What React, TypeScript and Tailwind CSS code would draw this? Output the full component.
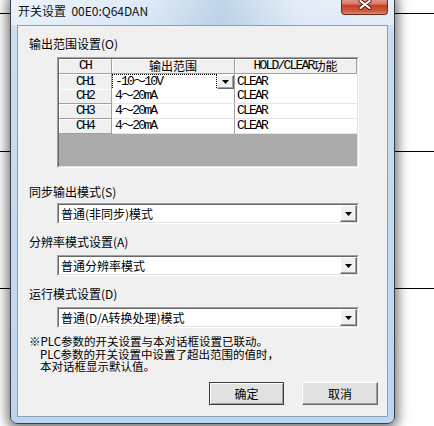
const cjk = "font-['Microsoft_YaHei','Noto_Sans_CJK_SC',sans-serif]";
const mono = "font-['Liberation_Mono','Noto_Sans_CJK_SC',monospace]";

function DropButton({ small }: { small?: boolean }) {
  return (
    <div
      className={`flex items-center justify-center bg-[#f0f0f0] border border-t-white border-l-white border-r-[#696969] border-b-[#696969] shadow-[inset_-1px_-1px_0_#a0a0a0] ${
        small ? 'w-[17px] h-[14px]' : 'w-[17px] h-[17px]'
      }`}
    >
      <svg width="7" height="4" viewBox="0 0 7 4">
        <path d="M0 0 H7 L3.5 4 Z" fill="#000" />
      </svg>
    </div>
  );
}

function Select({ value }: { value: string }) {
  return (
    <div className="ml-[28px] w-[302px] h-[21px] border border-t-[#a0a0a0] border-l-[#a0a0a0] border-r-white border-b-white">
      <div className="h-full flex items-center bg-white border border-t-[#696969] border-l-[#696969] border-r-[#e3e3e3] border-b-[#e3e3e3]">
        <span className={`${cjk} flex-1 pl-[2px] text-[12px] leading-[14px] text-black`}>{value}</span>
        <DropButton />
      </div>
    </div>
  );
}

function Label({ text, className = '' }: { text: string; className?: string }) {
  return <div className={`${cjk} text-[12px] leading-[16px] h-[16px] text-black ${className}`}>{text}</div>;
}

const headCell =
  'bg-[#f0f0f0] border-r border-b border-r-[#a0a0a0] border-b-[#a0a0a0] shadow-[inset_1px_1px_0_#fff] flex items-center justify-center';
const rowText = `grid grid-cols-[53px_123px_122px] h-[15px] ${mono} text-[13px] leading-[14px] tracking-[-1.8px] text-black`;

export default function App() {
  const rows = [
    { ch: 'CH1', range: '-10～10V', hold: 'CLEAR', focus: true },
    { ch: 'CH2', range: '4～20mA', hold: 'CLEAR' },
    { ch: 'CH3', range: '4～20mA', hold: 'CLEAR' },
    { ch: 'CH4', range: '4～20mA', hold: 'CLEAR' },
  ];

  return (
    <div className="relative w-[434px] h-[426px] overflow-hidden bg-white">
      {/* desktop lines behind the dialog */}
      <div className="absolute left-0 right-0 top-[13px] h-px bg-black" />
      <div className="absolute left-0 right-0 top-[151px] h-px bg-black" />
      <div className="absolute left-0 right-0 top-[288px] h-px bg-black" />

      {/* dialog window */}
      <div className="absolute left-[10px] top-[-6px] w-[385px] h-[430px] flex flex-col rounded-[7px] border border-[#3a3f47] bg-[linear-gradient(180deg,#dbe8f5_0px,#c9def3_40px,#bcd6f0_100%)] shadow-[0_2px_12px_3px_rgba(0,0,0,0.55)]">
        <div className="h-[30px] flex bg-[linear-gradient(90deg,rgba(255,255,255,0.5)_0%,rgba(255,255,255,0.2)_35%,rgba(150,180,210,0.35)_55%,rgba(255,255,255,0.3)_75%,rgba(255,255,255,0.4)_100%)]">
          <div className={`${cjk} pl-[7px] pt-[9px] text-[12px] leading-[14px] text-[#111]`}>开关设置&nbsp;&nbsp;00E0:Q64DAN</div>
          <div className="ml-auto mr-[6px] w-[47px] h-[20px] rounded-b-[4px] border border-t-0 border-[#6a2c22] bg-[linear-gradient(180deg,#e9ab9b_0%,#d9826b_45%,#c5432a_55%,#cf5a3d_85%,#e58a6c_100%)] flex items-center justify-center">
            <svg width="14" height="11" viewBox="0 0 14 11">
              <path d="M2.5 2 L11.5 9 M11.5 2 L2.5 9" stroke="#4a1c14" strokeWidth="4" strokeLinecap="round" />
              <path d="M2.5 2 L11.5 9 M11.5 2 L2.5 9" stroke="#fff" strokeWidth="2.2" strokeLinecap="round" />
            </svg>
          </div>
        </div>

        <div className="mx-[6px] h-[392px] border border-[#8a9fb8] bg-[#f0f0f0] pl-[11px] flex flex-col">
          <Label text="输出范围设置(O)" className="mt-[10px]" />

          {/* channel table */}
          <div className="ml-[28px] mt-[5px] w-[302px] h-[111px] border border-t-[#a0a0a0] border-l-[#a0a0a0] border-r-white border-b-white">
            <div className="h-full border border-t-[#696969] border-l-[#696969] border-r-[#e3e3e3] border-b-[#e3e3e3] flex flex-col bg-[#ababab]">
              <div className={rowText}>
                <div className={headCell}>CH</div>
                <div className={headCell}>
                  <span className={`${cjk} text-[12px] tracking-normal`}>输出范围</span>
                </div>
                <div className={headCell}>
                  HOLD/CLEAR<span className={`${cjk} text-[12px] tracking-normal`}>功能</span>
                </div>
              </div>
              {rows.map((r) => (
                <div key={r.ch} className={rowText}>
                  <div className={headCell}>{r.ch}</div>
                  <div className="bg-white border-r border-b border-r-[#a0a0a0] border-b-[#e6e6e6] flex items-center">
                    {r.focus ? (
                      <>
                        <div className="flex-1 h-full flex items-center pl-[2px] border border-dotted border-black">{r.range}</div>
                        <DropButton small />
                      </>
                    ) : (
                      <div className="pl-[3px]">{r.range}</div>
                    )}
                  </div>
                  <div className="bg-white border-b border-b-[#e6e6e6] flex items-center pl-[2px]">{r.hold}</div>
                </div>
              ))}
            </div>
          </div>

          <Label text="同步输出模式(S)" className="mt-[16px]" />
          <div className="mt-[3px]">
            <Select value="普通(非同步)模式" />
          </div>

          <Label text="分辨率模式设置(A)" className="mt-[10px]" />
          <div className="mt-[5px]">
            <Select value="普通分辨率模式" />
          </div>

          <Label text="运行模式设置(D)" className="mt-[10px]" />
          <div className="mt-[5px]">
            <Select value="普通(D/A转换处理)模式" />
          </div>

          <div className={`${cjk} mt-[7px] text-[11.5px] leading-[12.5px] text-black`}>
            <div>※PLC参数的开关设置与本对话框设置已联动。</div>
            <div className="pl-[11px]">PLC参数的开关设置中设置了超出范围的值时，</div>
            <div className="pl-[11px]">本对话框显示默认值。</div>
          </div>

          <div className="mt-[9.5px] flex justify-end gap-[18px] pr-[9px]">
            <button
              className={`${cjk} w-[75px] h-[23px] text-[12px] text-black bg-[#e1e1e1] border border-[#3c3c3c] shadow-[inset_1px_1px_0_#fff,inset_-1px_-1px_0_#a0a0a0]`}
            >
              确定
            </button>
            <button
              className={`${cjk} w-[76px] h-[23px] text-[12px] text-black bg-[#e1e1e1] border border-t-white border-l-white border-r-[#696969] border-b-[#696969] shadow-[inset_-1px_-1px_0_#a0a0a0]`}
            >
              取消
            </button>
          </div>
        </div>
      </div>
    </div>
  );
}
